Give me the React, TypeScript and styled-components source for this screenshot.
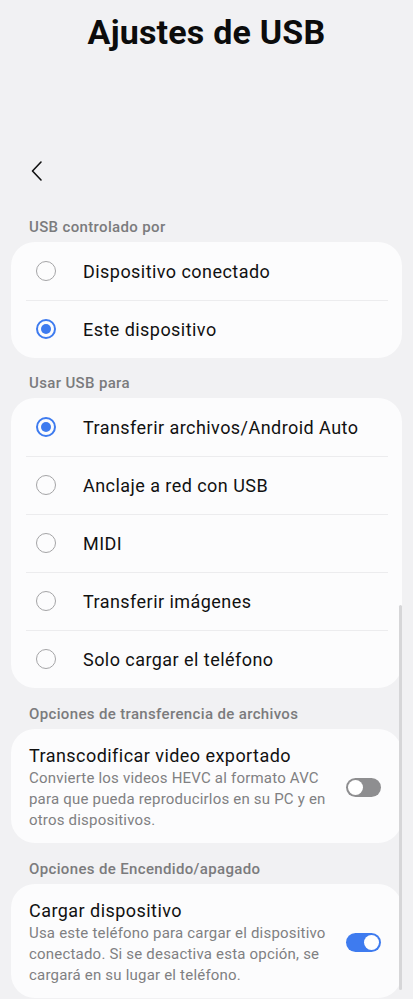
import styled, { createGlobalStyle } from "styled-components";

const GlobalStyle = createGlobalStyle`
  html, body {
    margin: 0;
    padding: 0;
    background: #f1f1f3;
  }
  body {
    font-family: Roboto, "Noto Sans", sans-serif;
    -webkit-font-smoothing: antialiased;
  }
`;

const usbControl = [
  { label: "Dispositivo conectado", checked: false },
  { label: "Este dispositivo", checked: true },
];

const usbModes = [
  { label: "Transferir archivos/Android Auto", checked: true },
  { label: "Anclaje a red con USB", checked: false },
  { label: "MIDI", checked: false },
  { label: "Transferir imágenes", checked: false },
  { label: "Solo cargar el teléfono", checked: false },
];

export default function App() {
  return (
    <>
      <GlobalStyle />
      <Page>
        <Title>Ajustes de USB</Title>
        <Toolbar>
          <BackButton aria-label="Atrás">
            <svg width="14" height="22" viewBox="0 0 14 22" fill="none">
              <path d="M11 2 L2.5 11 L11 20" stroke="#111" strokeWidth="1.6" strokeLinecap="round" strokeLinejoin="round" />
            </svg>
          </BackButton>
        </Toolbar>

        <SectionLabel $top={23}>USB controlado por</SectionLabel>
        <Card>
          {usbControl.map((item, i) => (
            <RadioRow key={item.label} $divider={i > 0}>
              <Radio $checked={item.checked} />
              <RowText>{item.label}</RowText>
            </RadioRow>
          ))}
        </Card>

        <SectionLabel $top={15}>Usar USB para</SectionLabel>
        <Card>
          {usbModes.map((item, i) => (
            <RadioRow key={item.label} $divider={i > 0}>
              <Radio $checked={item.checked} />
              <RowText>{item.label}</RowText>
            </RadioRow>
          ))}
        </Card>

        <SectionLabel $top={16}>Opciones de transferencia de archivos</SectionLabel>
        <Card>
          <SwitchRow>
            <SwitchText>
              <SwitchTitle>Transcodificar video exportado</SwitchTitle>
              <SwitchDesc>
                Convierte los videos HEVC al formato AVC para que pueda reproducirlos en su PC y en otros
                dispositivos.
              </SwitchDesc>
            </SwitchText>
            <Toggle $on={false} />
          </SwitchRow>
        </Card>

        <SectionLabel $top={16}>Opciones de Encendido/apagado</SectionLabel>
        <Card>
          <SwitchRow>
            <SwitchText>
              <SwitchTitle>Cargar dispositivo</SwitchTitle>
              <SwitchDesc>
                Usa este teléfono para cargar el dispositivo conectado. Si se desactiva esta opción, se
                cargará en su lugar el teléfono.
              </SwitchDesc>
            </SwitchText>
            <Toggle $on={true} />
          </SwitchRow>
        </Card>
        <ScrollBar />
      </Page>
    </>
  );
}

const Page = styled.div`
  position: relative;
  width: 413px;
  height: 999px;
  overflow: hidden;
  padding: 0 11px;
  box-sizing: border-box;
`;

const Title = styled.h1`
  margin: 12px 0 0;
  text-align: center;
  font-size: 34px;
  line-height: 40px;
  font-weight: 700;
  color: #0c0c0c;
  letter-spacing: 0.2px;
`;

const Toolbar = styled.div`
  display: flex;
  align-items: center;
  height: 46px;
  margin-top: 96px;
`;

const BackButton = styled.button`
  display: flex;
  align-items: center;
  justify-content: center;
  border: none;
  background: none;
  padding: 0;
  margin-left: 16px;
  width: 20px;
  height: 30px;
`;

const SectionLabel = styled.div<{ $top: number }>`
  padding: ${(p) => p.$top}px 18px 5px;
  font-size: 15px;
  line-height: 20px;
  font-weight: 500;
  color: #7b7b7d;
  letter-spacing: 0.35px;
`;

const Card = styled.div`
  background: #fcfcfd;
  border-radius: 24px;
  overflow: hidden;
`;

const RadioRow = styled.div<{ $divider: boolean }>`
  position: relative;
  display: flex;
  align-items: center;
  height: 58px;
  padding-left: 25px;
  gap: 27px;
  ${(p) =>
    p.$divider &&
    `
    &::before {
      content: "";
      position: absolute;
      top: 0;
      left: 15px;
      right: 14px;
      height: 1px;
      background: #ececee;
    }
  `}
`;

const Radio = styled.span<{ $checked: boolean }>`
  box-sizing: border-box;
  width: 20px;
  height: 20px;
  border-radius: 50%;
  flex-shrink: 0;
  border: ${(p) => (p.$checked ? "2px solid #3e7bef" : "1.5px solid #a4a4a6")};
  display: flex;
  align-items: center;
  justify-content: center;
  &::after {
    content: "";
    display: ${(p) => (p.$checked ? "block" : "none")};
    width: 10px;
    height: 10px;
    border-radius: 50%;
    background: #3e7bef;
  }
`;

const RowText = styled.span`
  font-size: 18px;
  color: #111;
  letter-spacing: 0.45px;
`;

const SwitchRow = styled.div`
  display: flex;
  align-items: center;
  padding: 15px 21px 12px 18px;
  gap: 16px;
`;

const SwitchText = styled.div`
  flex: 1;
  display: flex;
  flex-direction: column;
`;

const SwitchTitle = styled.div`
  font-size: 18px;
  line-height: 24px;
  color: #111;
  letter-spacing: 0.45px;
`;

const SwitchDesc = styled.div`
  font-size: 15px;
  line-height: 21px;
  color: #808082;
  letter-spacing: 0.2px;
`;

const Toggle = styled.span<{ $on: boolean }>`
  position: relative;
  flex-shrink: 0;
  width: 35px;
  height: 19px;
  border-radius: 10px;
  background: ${(p) => (p.$on ? "#3e7bef" : "#8e8e90")};
  &::after {
    content: "";
    position: absolute;
    top: 2px;
    ${(p) => (p.$on ? "right: 2px;" : "left: 2px;")}
    width: 15px;
    height: 15px;
    border-radius: 50%;
    background: #fff;
  }
`;

const ScrollBar = styled.div`
  position: absolute;
  right: 11px;
  top: 605px;
  width: 3px;
  height: 385px;
  border-radius: 2px;
  background: #d6d6d8;
`;
